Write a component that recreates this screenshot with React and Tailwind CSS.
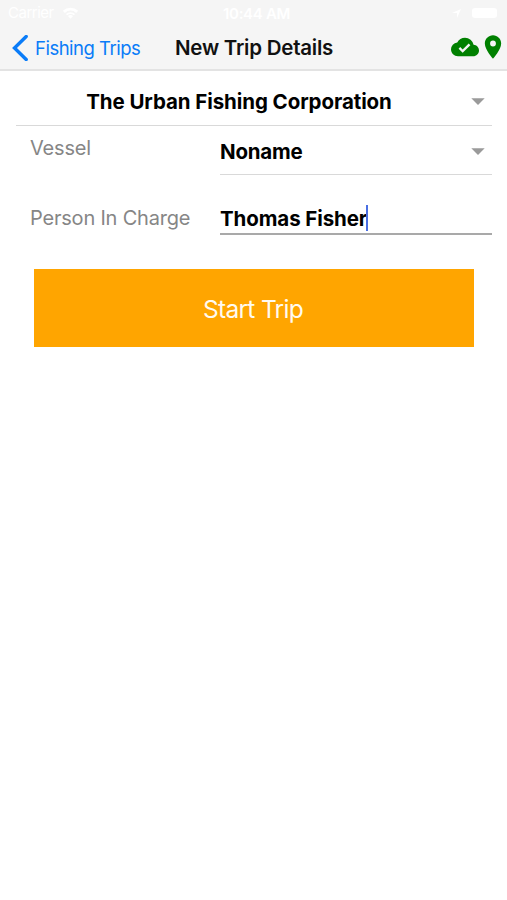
import React, { useState } from 'react';
import { MdCloudDone, MdPlace, MdArrowDropDown } from 'react-icons/md';

function StatusBar() {
  return (
    <div className="flex h-[26px] items-center pl-2 pr-[10px] text-[15px] text-white">
      <div className="flex w-[215px] items-center gap-2">
        <span className="pt-[1px] tracking-[-0.5px]">Carrier</span>
        <svg className="h-[12px] w-[17px]" viewBox="0 0 16 11" fill="currentColor">
          <path d="M8 11 5.6 8.4a3.5 3.5 0 0 1 4.8 0zM3.7 6.5a6.2 6.2 0 0 1 8.6 0l-1.1 1.2a4.6 4.6 0 0 0-6.4 0zM0.8 3.4a10.4 10.4 0 0 1 14.4 0L13.3 5.4a7.6 7.6 0 0 0-10.6 0z" />
        </svg>
      </div>
      <span className="flex-1 pt-[2px] font-semibold tracking-[-0.3px]">10:44 AM</span>
      <div className="flex items-center justify-end gap-[11px]">
        <svg className="h-[9px] w-[9px]" viewBox="0 0 9 9" fill="currentColor">
          <path d="M9 0 5 9V4H0z" />
        </svg>
        <span className="h-[10px] w-[25px] rounded-[3px] bg-white" />
      </div>
    </div>
  );
}

function NavBar() {
  return (
    <div className="flex h-[44px] items-center">
      <button className="flex w-[175px] items-center pl-[12px] text-[#0a7cf8]">
        <svg className="mr-[7px] h-[26px] w-[16px]" viewBox="0 0 16 26" fill="none" stroke="currentColor" strokeWidth="3.4">
          <path d="M14.2 1.5 2.5 13l11.7 11.5" strokeLinecap="round" />
        </svg>
        <span className="whitespace-nowrap pt-[2px] text-[18.5px] tracking-[-0.5px]">Fishing Trips</span>
      </button>
      <h1 className="flex-1 whitespace-nowrap text-[20.5px] font-semibold tracking-[-0.23px] text-[#111]">
        New Trip Details
      </h1>
      <div className="flex pb-[2px] text-[28px] text-[#008000]">
        <MdCloudDone />
        <MdPlace />
      </div>
    </div>
  );
}

export default function App() {
  const [person, setPerson] = useState('Thomas Fisher');

  return (
    <div className="h-[900px] w-[507px] overflow-hidden bg-white font-['Inter','Liberation_Sans',sans-serif]">
      <header className="h-[71px] border-b-2 border-[#e3e3e3] bg-[#f5f5f5]">
        <StatusBar />
        <NavBar />
      </header>

      <main className="pl-4 pr-[15px]">
        {/* Company */}
        <div className="flex h-[55px] items-center border-b border-[#d9d9d9] pt-[6px]">
          <span className="w-[446px] shrink-0 whitespace-nowrap pt-[2px] text-center text-[20.5px] font-bold tracking-[-0.08px] text-black">
            The Urban Fishing Corporation
          </span>
          <MdArrowDropDown className="-mr-1 h-[32px] w-[32px] shrink-0 text-[#9a9a9a]" />
        </div>

        {/* Vessel */}
        <div className="flex">
          <label className="w-[204px] pl-[14px] pt-[7px] text-[20px] tracking-[-0.2px] text-[#868686]">Vessel</label>
          <div className="flex h-[49px] flex-1 items-center justify-between border-b border-[#d9d9d9] pt-[2px]">
            <span className="pt-[2px] text-[20.5px] font-bold tracking-[-0.2px]">Noname</span>
            <MdArrowDropDown className="-mr-[2px] h-[32px] w-[32px] text-[#9a9a9a]" />
          </div>
        </div>

        {/* Person in charge */}
        <div className="flex pt-[28px]">
          <label className="w-[204px] whitespace-nowrap pl-[14px] text-[20px] tracking-[-0.2px] text-[#868686]">
            Person In Charge
          </label>
          <div className="flex h-[32px] flex-1 items-start border-b-2 border-[#a9a9a9] pt-[2px]">
            <span className="whitespace-nowrap text-[20.5px] leading-[28px] font-bold tracking-[-0.1px]">{person}</span>
            <span className="-ml-[1px] h-[26px] w-[2px] bg-[#4a6fe3]" />
          </div>
        </div>

        <button
          onClick={() => setPerson(person.trim())}
          className="ml-[18px] mt-[34px] flex h-[78px] w-[440px] items-center justify-center bg-[#ffa500] pt-[2px] pr-[2px] text-[24.5px] tracking-[-0.7px] text-[#fffaf0]"
        >
          Start Trip
        </button>
      </main>
    </div>
  );
}
